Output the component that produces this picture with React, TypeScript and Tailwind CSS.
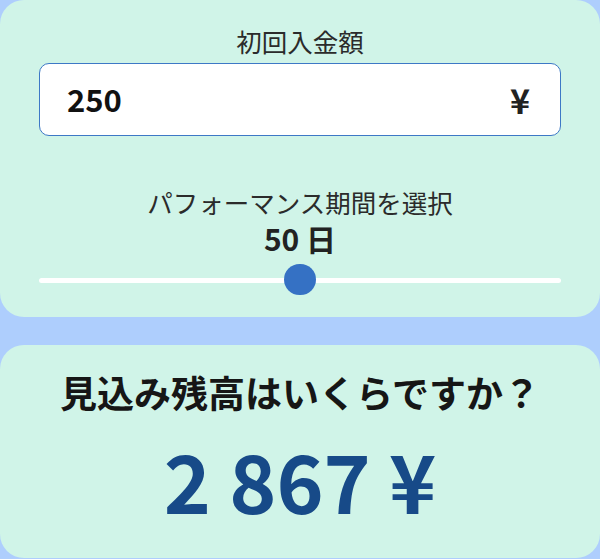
import React, { useState } from 'react';

const font = { fontFamily: '"Noto Sans CJK JP", "Noto Sans", sans-serif' };

export default function App() {
  const [amount] = useState('250');
  const [days, setDays] = useState(50);

  return (
    <div className="w-[600px] h-[559px] bg-[#aecefd] flex flex-col overflow-hidden" style={font}>
      {/* SETTINGS CARD */}
      <div className="h-[317px] bg-[#d0f4e8] rounded-[24px] flex flex-col items-center pt-[23px]">
        <div className="text-[25.5px] leading-[35px] text-[#2b2b2b]">初回入金額</div>
        <div className="mt-[5px] w-[522px] h-[73px] bg-white border-[1.5px] border-[#3d78c6] rounded-[10px] flex items-center justify-between pl-[27px] pr-[30px]">
          <span className="text-[31px] font-bold text-[#111]">{amount}</span>
          <span className="text-[34px] font-bold text-[#222]">¥</span>
        </div>

        <div className="mt-[48px] text-[25.5px] leading-[35px] text-[#2b2b2b]">パフォーマンス期間を選択</div>
        <div className="mt-[0px] text-[30px] leading-[38px] font-bold text-[#222]">{days} 日</div>

        {/* slider */}
        <div className="relative mt-[7px] w-[522px] h-[32px] flex items-center">
          <div className="w-full h-[5px] rounded-full bg-white" />
          <div
            className="absolute top-[0px] w-[32px] h-[31px] rounded-full bg-[#3571c4] cursor-pointer"
            style={{ left: `${(days / 100) * 522 - 16}px` }}
            onClick={() => setDays(days)}
          />
        </div>
      </div>

      {/* RESULT CARD */}
      <div className="mt-[28px] h-[213px] bg-[#d0f4e8] rounded-[24px] flex flex-col items-center pt-[22px]">
        <div className="text-[37px] leading-[50px] font-bold text-[#161616]">見込み残高はいくらですか？</div>
        <div className="mt-[12px] text-[80px] leading-[100px] font-bold text-[#174a88]">2 867 ¥</div>
      </div>
    </div>
  );
}
